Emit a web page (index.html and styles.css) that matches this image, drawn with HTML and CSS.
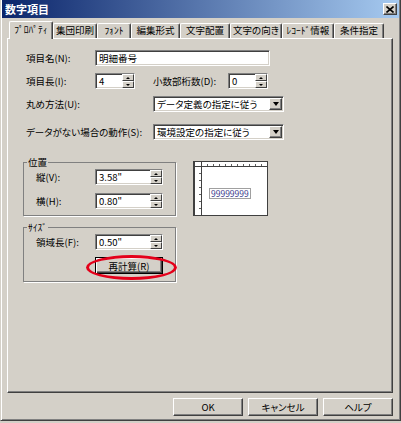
FILE: index.html
```html
<!DOCTYPE html>
<html lang="ja">
<head>
    <meta charset="UTF-8">
    <meta name="viewport" content="width=device-width, initial-scale=1.0">
    <title>数字項目</title>
    <link rel="stylesheet" href="styles.css">
</head>
<body>
    <div class="dialog">
        <div class="titlebar">
            <span class="title">数字項目</span>
            <span class="close">
                <svg width="8" height="7" viewBox="0 0 8 7"><path d="M0.5 0.5 L7.5 6.5 M7.5 0.5 L0.5 6.5" stroke="#000" stroke-width="1.6" fill="none"/></svg>
            </span>
        </div>

        <div class="tabs">
            <div class="tab active">ﾌﾟﾛﾊﾟﾃｨ</div>
            <div class="tab">集団印刷</div>
            <div class="tab">ﾌｫﾝﾄ</div>
            <div class="tab">編集形式</div>
            <div class="tab">文字配置</div>
            <div class="tab">文字の向き</div>
            <div class="tab">ﾚｺｰﾄﾞ情報</div>
            <div class="tab">条件指定</div>
        </div>

        <div class="panel">
            <div class="row">
                <span class="label">項目名(N):</span>
                <div class="field name">明細番号</div>
            </div>

            <div class="row">
                <span class="label">項目長(I):</span>
                <div class="spin short">
                    <span class="spin-text">4</span>
                    <span class="spin-btns"><i class="spin-btn up"></i><i class="spin-btn down"></i></span>
                </div>
                <span class="label sub">小数部桁数(D):</span>
                <div class="spin short">
                    <span class="spin-text">0</span>
                    <span class="spin-btns"><i class="spin-btn up"></i><i class="spin-btn down"></i></span>
                </div>
            </div>

            <div class="row choice">
                <span class="label wide">丸め方法(U):</span>
                <div class="select">
                    <span class="select-text">データ定義の指定に従う</span>
                    <span class="select-btn"></span>
                </div>
            </div>

            <div class="row choice">
                <span class="label wide">データがない場合の動作(S):</span>
                <div class="select">
                    <span class="select-text">環境設定の指定に従う</span>
                    <span class="select-btn"></span>
                </div>
            </div>

            <div class="lower">
                <div class="groups">
                    <fieldset class="group">
                        <legend>位置</legend>
                        <div class="row">
                            <span class="label narrow">縦(V):</span>
                            <div class="spin long">
                                <span class="spin-text">3.58"</span>
                                <span class="spin-btns"><i class="spin-btn up"></i><i class="spin-btn down"></i></span>
                            </div>
                        </div>
                        <div class="row">
                            <span class="label narrow">横(H):</span>
                            <div class="spin long">
                                <span class="spin-text">0.80"</span>
                                <span class="spin-btns"><i class="spin-btn up"></i><i class="spin-btn down"></i></span>
                            </div>
                        </div>
                    </fieldset>

                    <fieldset class="group size">
                        <legend>ｻｲｽﾞ</legend>
                        <div class="row">
                            <span class="label narrow">領域長(F):</span>
                            <div class="spin long">
                                <span class="spin-text">0.50"</span>
                                <span class="spin-btns"><i class="spin-btn up"></i><i class="spin-btn down"></i></span>
                            </div>
                        </div>
                        <div class="btn-row">
                            <button class="btn default">再計算(R)</button>
                            <span class="mark"></span>
                        </div>
                    </fieldset>
                </div>

                <div class="preview">
                    <div class="ruler-corner"></div>
                    <div class="ruler-top"></div>
                    <div class="ruler-left"></div>
                    <div class="sheet"><span class="sample">99999999</span></div>
                </div>
            </div>
        </div>

        <div class="actions">
            <button class="btn">OK</button>
            <button class="btn">キャンセル</button>
            <button class="btn">ヘルプ</button>
        </div>
    </div>
</body>
</html>
```

FILE: styles.css
```css
* {
    box-sizing: border-box;
}
body {
    margin: 0;
    background: #d4d0c8;
    font-family: "Noto Sans CJK JP", "Noto Sans", sans-serif;
    font-size: 9.5px;
    line-height: 12px;
    font-feature-settings: "palt";
    color: #000;
}
.dialog {
    width: 401px;
    height: 421px;
    padding: 0 1px;
    background: #d4d0c8;
    border-left: 1px solid #d4d0c8;
    border-right: 1px solid #404040;
    border-bottom: 1px solid #404040;
    box-shadow: inset 1px 0 #fff, inset -1px -1px #808080;
}

/* title bar */
.titlebar {
    height: 18px;
    display: flex;
    align-items: center;
    justify-content: space-between;
    padding: 0 2px 0 3px;
    background: linear-gradient(to right, #0a246a, #a6caf0);
}
.title {
    color: #fff;
    font-weight: bold;
    font-size: 11px;
}
.close {
    width: 14px;
    height: 12px;
    display: flex;
    align-items: center;
    justify-content: center;
    background: #d4d0c8;
    border: 1px solid;
    border-color: #fff #404040 #404040 #fff;
    box-shadow: inset -1px -1px #808080;
}

/* tabs */
.tabs {
    display: flex;
    align-items: flex-end;
    height: 17px;
    margin-top: 3px;
    padding-left: 7px;
}
.tab {
    height: 15px;
    border: 1px solid;
    border-color: #fff #404040 transparent #fff;
    border-bottom: none;
    border-radius: 2px 2px 0 0;
    box-shadow: inset -1px 0 #808080;
    text-align: center;
    line-height: 13px;
    white-space: nowrap;
}
.tab.active {
    position: relative;
    z-index: 1;
    height: 18px;
    margin-bottom: -1px;
    background: #d4d0c8;
    line-height: 15px;
}
.tab:nth-child(1) { width: 44px; }
.tab:nth-child(2) { width: 44px; }
.tab:nth-child(3) { width: 34px; }
.tab:nth-child(4) { width: 49px; }
.tab:nth-child(5) { width: 50px; }
.tab:nth-child(6) { width: 52px; }
.tab:nth-child(7) { width: 52px; }
.tab:nth-child(8) { width: 50px; }

.panel {
    height: 355px;
    margin: 0 6px 0 5px;
    padding-top: 11px;
    border: 1px solid;
    border-color: #fff #404040 #404040 #fff;
    box-shadow: inset -1px -1px #808080;
}

/* form rows */
.row {
    display: flex;
    align-items: center;
    height: 16px;
    margin: 7px 0 0 18px;
}
.row:first-child {
    margin-top: 0;
}
.row.choice + .row.choice {
    margin-top: 12px;
}
.label {
    width: 69px;
    white-space: nowrap;
}
.label.sub {
    width: 75px;
    margin-left: 18px;
}
.label.wide {
    width: 127px;
}
.label.narrow {
    width: 59px;
}

.field,
.spin,
.select {
    height: 16px;
    background: #fff;
    border: 1px solid;
    border-color: #808080 #fff #fff #808080;
    box-shadow: inset 1px 1px #404040, inset -1px -1px #d4d0c8;
    line-height: 14px;
}
.field {
    padding: 0 3px;
}
.field.name {
    width: 175px;
}

.spin {
    display: flex;
}
.spin.short {
    width: 40px;
}
.spin.long {
    width: 68px;
}
.spin-text {
    flex: 1;
    padding-left: 3px;
}
.spin-btns {
    display: flex;
    flex-direction: column;
    width: 12px;
}
.spin-btn {
    flex: 1;
    display: flex;
    align-items: center;
    justify-content: center;
    background: #d4d0c8;
    border: 1px solid;
    border-color: #fff #404040 #404040 #fff;
}
.spin-btn::before {
    content: "";
    border-left: 2px solid transparent;
    border-right: 2px solid transparent;
    border-bottom: 2px solid #000;
}
.spin-btn.down::before {
    border-bottom: 0;
    border-top: 2px solid #000;
}

.select {
    display: flex;
    width: 131px;
}
.select-text {
    flex: 1;
    padding-left: 3px;
    white-space: nowrap;
}
.select-btn {
    width: 13px;
    margin: 1px 1px 1px 0;
    display: flex;
    align-items: center;
    justify-content: center;
    background: #d4d0c8;
    border: 1px solid;
    border-color: #fff #404040 #404040 #fff;
    box-shadow: inset -1px -1px #808080;
}
.select-btn::before {
    content: "";
    border-left: 3px solid transparent;
    border-right: 3px solid transparent;
    border-top: 4px solid #000;
}

/* groups + preview */
.lower {
    display: flex;
    align-items: flex-start;
    gap: 17px;
    margin: 17px 0 0 15px;
}
.group {
    width: 153px;
    min-width: 0;
    margin: 0;
    padding: 2px 0 6px 3px;
    border: 1px solid #808080;
    box-shadow: 1px 1px #fff;
}
.group.size {
    margin-top: 6px;
    padding-bottom: 7px;
}
.group legend {
    padding: 0 1px;
    line-height: 10px;
    background: #d4d0c8;
}
.group .row {
    margin: 8px 0 0 9px;
}
.group .row:first-of-type {
    margin-top: 0;
}
.btn-row {
    position: relative;
    width: 68px;
    margin: 7px 0 0 68px;
}
.mark {
    position: absolute;
    left: -9px;
    top: -2px;
    width: 91px;
    height: 25px;
    border: 3px solid #e4001a;
    border-radius: 50%;
    pointer-events: none;
}

.btn {
    width: 70px;
    height: 18px;
    padding: 0;
    font: inherit;
    color: #000;
    background: #d4d0c8;
    border: 1px solid;
    border-color: #fff #404040 #404040 #fff;
    box-shadow: inset -1px -1px #808080;
}
.btn.default {
    width: 68px;
    height: 17px;
    border-color: #000;
    box-shadow: inset 1px 1px #fff, inset -1px -1px #404040, inset -2px -2px #808080;
}

.preview {
    display: grid;
    grid-template-columns: 7px 1fr;
    grid-template-rows: 5px 1fr;
    width: 75px;
    height: 55px;
    margin-top: 4px;
    background: #fff;
    border: 1px solid #404040;
    border-left-width: 2px;
}
.ruler-corner {
    border-right: 1px solid #404040;
    border-bottom: 1px solid #404040;
}
.ruler-top {
    border-bottom: 1px solid #404040;
    background: repeating-linear-gradient(to right, transparent 0 5px, #606060 5px 6px) bottom / 100% 2px no-repeat;
}
.ruler-left {
    border-right: 1px solid #404040;
    background: repeating-linear-gradient(to bottom, transparent 0 6px, #606060 6px 7px) right / 2px 100% no-repeat;
}
.sheet {
    padding: 20px 0 0 7px;
}
.sample {
    display: inline-block;
    padding: 0 1px;
    border: 1px solid #a0a0a0;
    font-size: 8.5px;
    line-height: 9px;
    color: #3a3a8c;
}

/* dialog buttons */
.actions {
    display: flex;
    justify-content: flex-end;
    gap: 5px;
    margin: 5px 6px 0 0;
}
```
